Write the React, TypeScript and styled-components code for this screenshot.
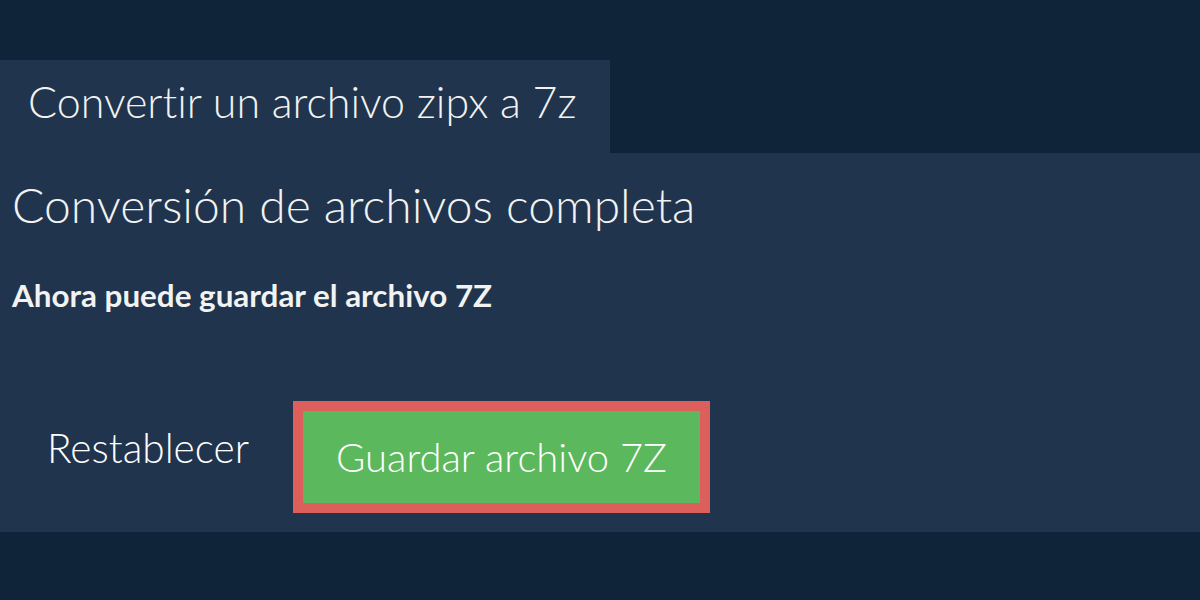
import styled, { createGlobalStyle } from "styled-components";

const GlobalStyle = createGlobalStyle`
  body {
    margin: 0;
    background: #0f2339;
    font-family: Lato, "Open Sans", sans-serif;
    font-variant-ligatures: none;
    color: #f2f2f2;
  }
`;

const Page = styled.div`
  width: 1200px;
  height: 600px;
  padding-top: 60px;
  box-sizing: border-box;
`;

const Tab = styled.div`
  width: 610px;
  height: 93px;
  box-sizing: border-box;
  background: #20354d;
  padding: 20px 28px 0;
  font-size: 43px;
  font-weight: 300;
  line-height: 1;
`;

const Panel = styled.div`
  background: #20354d;
  height: 379px;
  box-sizing: border-box;
  padding: 28px 12px 0;
`;

const Title = styled.h1`
  margin: 0;
  font-size: 48px;
  font-weight: 300;
  line-height: 1;
`;

const Subtitle = styled.p`
  margin: 51px 0 0;
  font-size: 31.4px;
  font-weight: 700;
  line-height: 1;
`;

const Actions = styled.div`
  display: flex;
  align-items: flex-start;
  margin-top: 90px;
  gap: 44px;
`;

const Button = styled.button<{ primary?: boolean }>`
  font-family: Lato, sans-serif;
  font-variant-ligatures: none;
  font-size: ${(p) => (p.primary ? "40px" : "40.6px")};
  font-weight: 300;
  line-height: 1;
  color: #ffffff;
  cursor: pointer;
  background: ${(p) => (p.primary ? "#5cb85c" : "transparent")};
  border: ${(p) => (p.primary ? "10px solid #dc5f5c" : "none")};
  padding: ${(p) => (p.primary ? "0 33px" : "0 0 0 35px")};
  margin-top: ${(p) => (p.primary ? "0" : "27px")};
  height: ${(p) => (p.primary ? "112px" : "auto")};
`;

function App() {
  return (
    <Page>
      <GlobalStyle />
      <Tab>Convertir un archivo zipx a 7z</Tab>
      <Panel>
        <Title>Conversión de archivos completa</Title>
        <Subtitle>Ahora puede guardar el archivo 7Z</Subtitle>
        <Actions>
          <Button>Restablecer</Button>
          <Button primary>Guardar archivo 7Z</Button>
        </Actions>
      </Panel>
    </Page>
  );
}

export default App;
